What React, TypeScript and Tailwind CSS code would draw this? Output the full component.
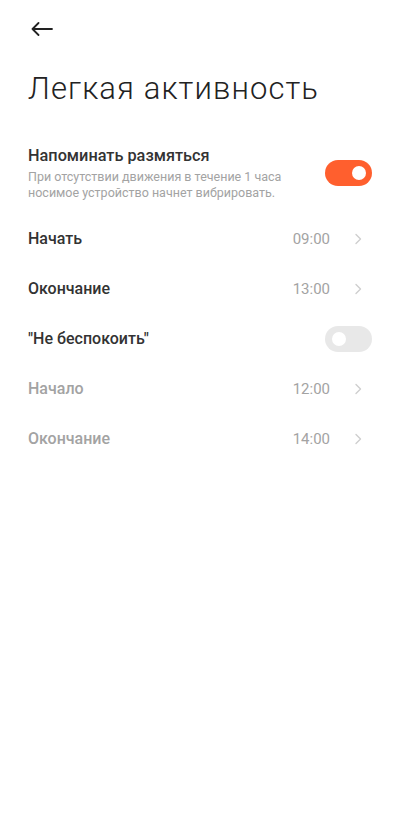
import React from "react";

function Chevron() {
  return (
    <svg width="8" height="12" viewBox="0 0 8 12" fill="none" className="ml-[24px]">
      <path d="M2 1.5L6.5 6L2 10.5" stroke="#cfcfcf" strokeWidth="1.4" strokeLinecap="round" strokeLinejoin="round" />
    </svg>
  );
}

function Toggle({ on }: { on: boolean }) {
  return on ? (
    <div className="w-[47px] h-[26px] rounded-full bg-[#ff5f2e] flex items-center justify-end pr-[6px]">
      <div className="w-[14px] h-[14px] rounded-full bg-white" />
    </div>
  ) : (
    <div className="w-[47px] h-[26px] rounded-full bg-[#e8e8e8] flex items-center justify-start pl-[7px]">
      <div className="w-[14px] h-[14px] rounded-full bg-white" />
    </div>
  );
}

function Row({ label, value, disabled }: { label: string; value: string; disabled?: boolean }) {
  return (
    <div className="h-[50px] flex items-center justify-between">
      <span className={"text-[16px] font-medium " + (disabled ? "text-[#a3a3a3]" : "text-[#333333]")}>{label}</span>
      <div className="flex items-center pr-[10px]">
        <span className="text-[15px] text-[#a3a3a3]">{value}</span>
        <Chevron />
      </div>
    </div>
  );
}

export default function App() {
  return (
    <div className="w-[400px] h-[814px] bg-white" style={{ fontFamily: "Roboto, 'Noto Sans', sans-serif" }}>
      <div className="h-[58px] flex items-center pl-[31px]">
        <svg width="22" height="14" viewBox="0 0 22 14" fill="none">
          <path d="M21 7H1.5M7.5 1L1.5 7L7.5 13" stroke="#222222" strokeWidth="1.8" strokeLinecap="round" strokeLinejoin="round" />
        </svg>
      </div>
      <div className="px-[28px]">
        <h1 className="mt-[10px] h-[41px] leading-[41px] text-[31px] tracking-[1.1px] font-light text-[#222222] whitespace-nowrap">Легкая активность</h1>
        <div className="mt-[36px] flex items-center justify-between">
          <div>
            <div className="h-[22px] leading-[22px] text-[16.3px] font-medium text-[#333333]">Напоминать размяться</div>
            <div className="mt-[2px] text-[12.5px] leading-[16px] text-[#a3a3a3]">
              При отсутствии движения в течение 1 часа
              <br />
              носимое устройство начнет вибрировать.
            </div>
          </div>
          <Toggle on />
        </div>
        <div className="mt-[13px]">
          <Row label="Начать" value="09:00" />
          <Row label="Окончание" value="13:00" />
          <div className="h-[50px] flex items-center justify-between">
            <span className="text-[16px] font-medium text-[#333333]">"Не беспокоить"</span>
            <Toggle on={false} />
          </div>
          <Row label="Начало" value="12:00" disabled />
          <Row label="Окончание" value="14:00" disabled />
        </div>
      </div>
    </div>
  );
}
